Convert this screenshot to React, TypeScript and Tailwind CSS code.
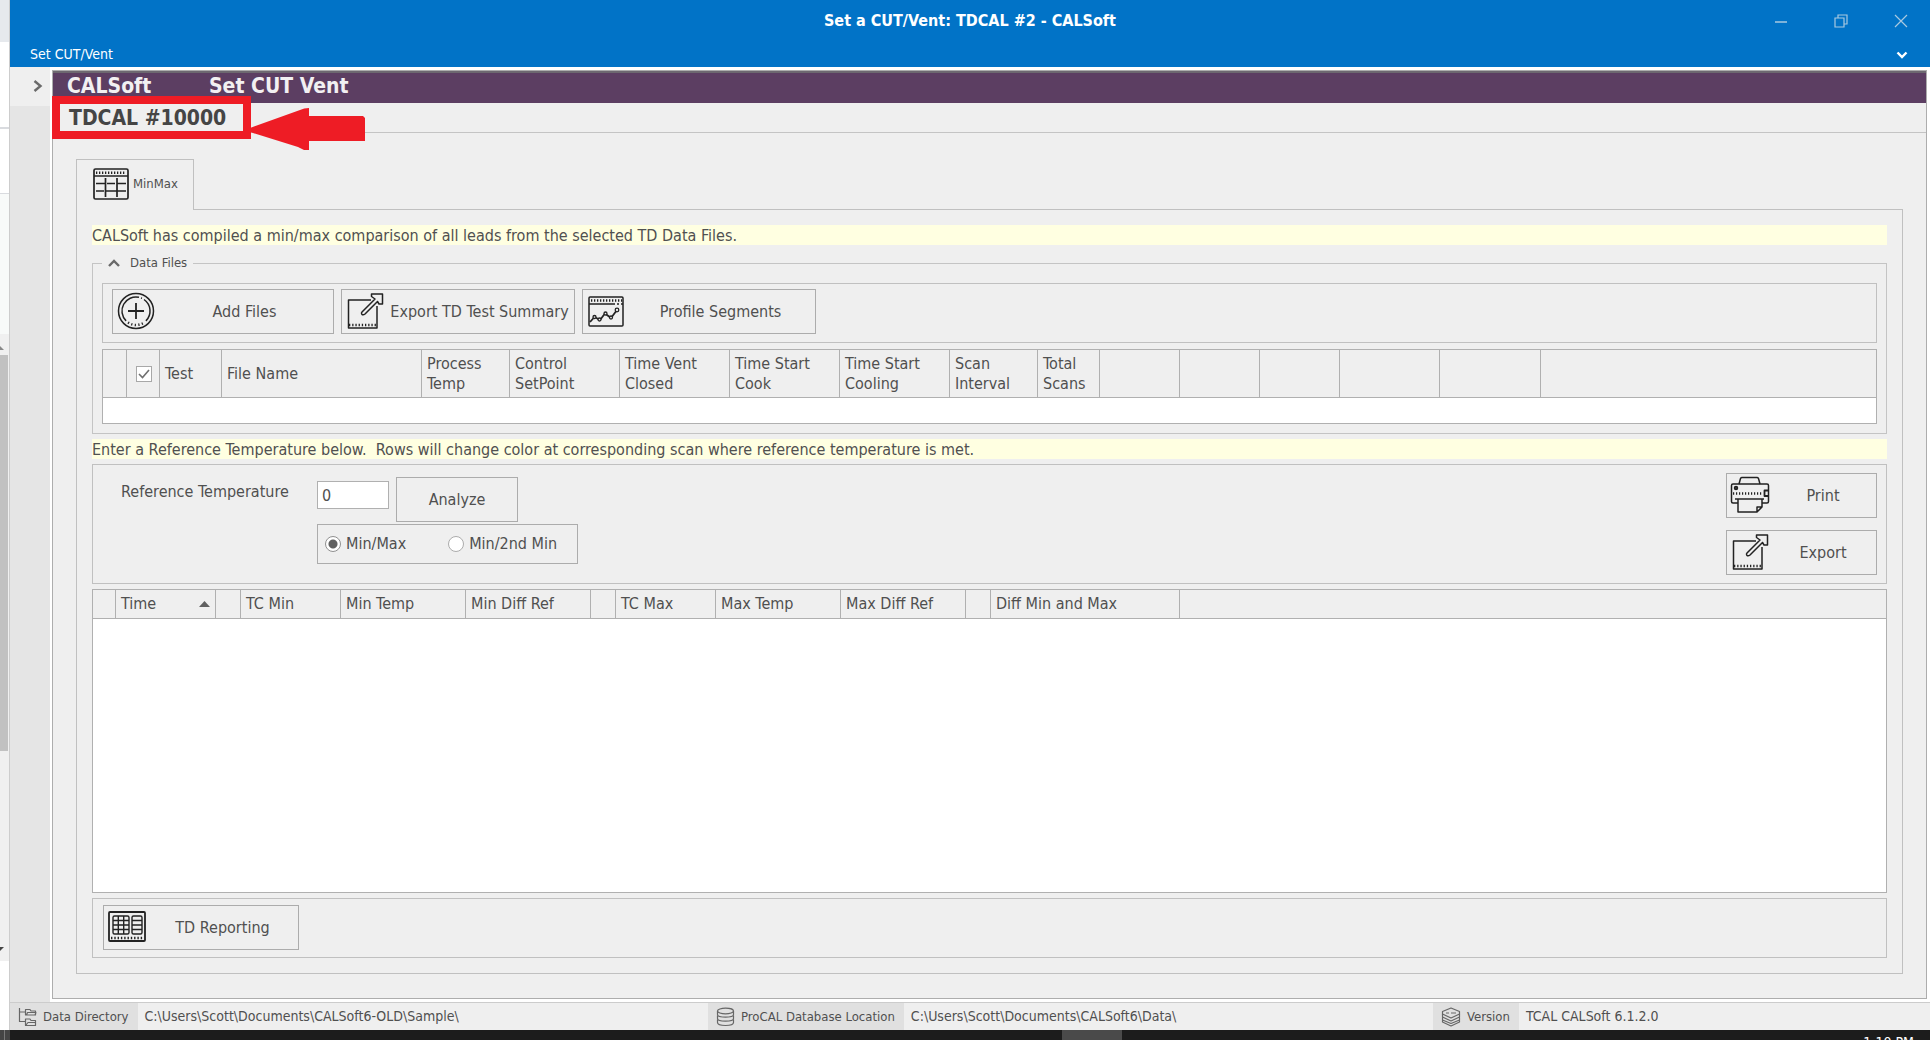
import { useState, type ReactNode } from "react";

type Column = { id: string; label?: ReactNode; width?: number; sorted?: boolean };

const FILE_COLUMNS: Column[] = [
  { id: "handle", width: 24 },
  { id: "check", width: 33 },
  { id: "test", label: "Test", width: 62 },
  { id: "file", label: "File Name", width: 200 },
  { id: "process", label: <>Process<br />Temp</>, width: 88 },
  { id: "control", label: <>Control<br />SetPoint</>, width: 110 },
  { id: "vent", label: <>Time Vent<br />Closed</>, width: 110 },
  { id: "cook", label: <>Time Start<br />Cook</>, width: 110 },
  { id: "cooling", label: <>Time Start<br />Cooling</>, width: 110 },
  { id: "interval", label: <>Scan<br />Interval</>, width: 88 },
  { id: "scans", label: <>Total<br />Scans</>, width: 62 },
  { id: "e1", width: 80 },
  { id: "e2", width: 80 },
  { id: "e3", width: 80 },
  { id: "e4", width: 100 },
  { id: "e5", width: 101 },
  { id: "rest" },
];

const RESULT_COLUMNS: Column[] = [
  { id: "handle", width: 23 },
  { id: "time", label: "Time", width: 100, sorted: true },
  { id: "gap1", width: 25 },
  { id: "tcmin", label: "TC Min", width: 100 },
  { id: "mintemp", label: "Min Temp", width: 125 },
  { id: "mindiff", label: "Min Diff Ref", width: 125 },
  { id: "gap2", width: 25 },
  { id: "tcmax", label: "TC Max", width: 100 },
  { id: "maxtemp", label: "Max Temp", width: 125 },
  { id: "maxdiff", label: "Max Diff Ref", width: 125 },
  { id: "gap3", width: 25 },
  { id: "diff", label: "Diff Min and Max", width: 189 },
  { id: "rest" },
];

function PlusIcon() {
  return (
    <svg width="38" height="38" viewBox="0 0 38 38" fill="none" stroke="#222" strokeWidth="1.5">
      <circle cx="19" cy="19" r="17.5" />
      <path d="M9.100 28.900A14 14 0 0 1 22 5.300M24 6L25 6.300M27 7.500A14 14 0 0 1 28.900 28.900" />
      <path d="M11 30.500Q19 35.500 27.500 30.500" strokeWidth="2.500" strokeDasharray="1.2 2.4" />
      <path d="M11 19h16M19 11v16" strokeWidth="1.800" />
    </svg>
  );
}

function ExportIcon() {
  return (
    <svg width="38" height="38" viewBox="0 0 38 38" fill="none" stroke="#222" strokeWidth="1.500" strokeLinejoin="round">
      <path d="M25 8H2.500V36H31V14" />
      <path d="M3 33H31" strokeWidth="2.500" strokeDasharray="1.300 1.900" />
      <path d="M16 20L29 7L25.500 4.500V2H36.500V12H33L31.500 9.500L19 22Q17 23.500 15.800 22.200Q15 21 16 20Z" fill="#efefef" />
    </svg>
  );
}

function ChartIcon() {
  return (
    <svg width="38" height="38" viewBox="0 0 38 38" fill="none" stroke="#222" strokeWidth="1.500" strokeLinejoin="round">
      <rect x="2" y="5" width="34" height="29" rx="1" />
      <path d="M2 12H28M30 12h2M34 12h2" />
      <path d="M4 8.500H35" strokeWidth="2.500" strokeDasharray="1.300 1.700" />
      <path d="M3 30L7.500 25L13 28L18 21.500L24 26L30 18" strokeWidth="1.800" />
      <g fill="#efefef" strokeWidth="1.300">
        <circle cx="7.500" cy="25" r="1.500" />
        <circle cx="12.500" cy="27.500" r="1.500" />
        <circle cx="18.500" cy="21.500" r="1.500" />
        <circle cx="24" cy="25.500" r="1.500" />
        <circle cx="30" cy="18" r="1.800" />
      </g>
    </svg>
  );
}

function GridIcon() {
  return (
    <svg width="36" height="32" viewBox="0 0 36 32" fill="none" stroke="#222" strokeWidth="1.700">
      <rect x="1" y="1" width="34" height="30" rx="1.500" />
      <path d="M1 8H35" />
      <path d="M3 4.700H33" strokeWidth="2.500" strokeDasharray="1.300 1.700" />
      <path d="M12.500 10V29M24 10V29M3 15.500H12M14 15.500H22M24 15.500H33M3 23H11M13 23H33" />
    </svg>
  );
}

function PrinterIcon() {
  return (
    <svg width="40" height="38" viewBox="0 0 40 38" fill="none" stroke="#222" strokeWidth="1.500" strokeLinejoin="round">
      <path d="M9 8L10.500 2.500Q11 1.500 12 1.500H27Q28 1.500 28.500 2.500L30 8" />
      <path d="M8 27H3Q1.500 27 1.500 25.500V9.500Q1.500 8 3 8H37Q38.500 8 38.500 9.500V25.500Q38.500 27 37 27H32" />
      <path d="M5 23H34" />
      <path d="M8 23V36H27L32 31V23M27 36V31H32" />
      <path d="M3 17.500H33" strokeWidth="2.500" strokeDasharray="1.200 1.800" />
      <path d="M38.500 14.500H34.500V20H38.500" strokeWidth="1.800" />
      <circle cx="6" cy="12" r="1.500" fill="#444" />
    </svg>
  );
}

function ReportIcon() {
  return (
    <svg width="38" height="31" viewBox="0 0 38 31" fill="none" stroke="#222" strokeWidth="1.800">
      <rect x="1" y="1" width="36" height="29" rx="1" />
      <rect x="5" y="5" width="16" height="18" rx="1.500" strokeWidth="1.400" />
      <rect x="24" y="5" width="10" height="18" rx="1.500" strokeWidth="1.400" />
      <path d="M5 9.500H21M5 14H21M5 18.500H21M10.300 5V23M15.700 5V23M24 9.500H34M24 14H34M24 18.500H34" strokeWidth="1.400" />
      <path d="M3 27H36" strokeWidth="2.500" strokeDasharray="1.400 1.900" />
    </svg>
  );
}

function FoldersIcon() {
  return (
    <svg width="19" height="20" viewBox="0 0 19 20" fill="none" stroke="#666" strokeWidth="1.200" strokeLinejoin="round">
      <path d="M1.500 1V14.500H8M1.500 5H7" />
      <path d="M7.500 8V2.500H12L13 4H17.500V8ZM8.500 8L9.500 5.500H18L17 8M7.500 18.500V12H12L13 13.500H17.500V18.500ZM8 18L10 15.500H18" />
    </svg>
  );
}

function DatabaseIcon() {
  return (
    <svg width="19" height="20" viewBox="0 0 19 20" fill="none" stroke="#666" strokeWidth="1.200">
      <ellipse cx="9.500" cy="4" rx="8" ry="2.800" />
      <path d="M1.500 4V7.500C1.500 11 17.500 11 17.500 7.500V4M1.500 8.500V11.500C1.500 15 17.500 15 17.500 11.500V8.500M1.500 12.500V15.500C1.500 19.500 17.500 19.500 17.500 15.500V12.500" />
    </svg>
  );
}

function LayersIcon() {
  return (
    <svg width="20" height="20" viewBox="0 0 20 20" fill="none" stroke="#666" strokeWidth="1.200" strokeLinejoin="round">
      <path d="M10 1L18.500 4.500V7L10 11L1.500 7V4.500ZM5 6H8M10 6H15" />
      <path d="M1.500 7V10L10 14L18.500 10V7M1.500 10.500V13L10 16.500L18.500 13V10.500M1.500 13.500V15L10 19L18.500 15V13.500" />
    </svg>
  );
}

function ToolButton({ icon, label, className }: { icon: ReactNode; label: string; className: string }) {
  return (
    <button type="button" className={`flex h-[45px] items-center border border-[#acacac] pl-[3px] ${className}`}>
      <span className="flex w-10 shrink-0 justify-center pb-[2px]">{icon}</span>
      <span className="flex-1 whitespace-nowrap text-center">{label}</span>
    </button>
  );
}

function HeaderRow({ columns, className, check }: { columns: Column[]; className: string; check?: ReactNode }) {
  return (
    <table className="w-full table-fixed border-separate border-spacing-0">
      <colgroup>
        {columns.map((c) => (
          <col key={c.id} style={{ width: c.width }} />
        ))}
      </colgroup>
      <thead>
        <tr className={className}>
          {columns.map((c) => (
            <th
              key={c.id}
              scope="col"
              className="whitespace-nowrap border-b border-r border-[#b0b0b0] bg-[#efefef] px-[5px] text-left font-normal leading-5 last:border-r-0"
            >
              {c.id === "check" ? check : c.sorted ? (
                <span className="flex items-center justify-between">
                  {c.label}
                  <svg width="11" height="6" viewBox="0 0 11 6"><path d="M0 6L5.500 0L11 6Z" fill="#606060" /></svg>
                </span>
              ) : c.label}
            </th>
          ))}
        </tr>
      </thead>
    </table>
  );
}

function Hint({ children }: { children: ReactNode }) {
  return <p className="h-5 whitespace-pre bg-[#ffffe1] leading-[22px]">{children}</p>;
}

function Status({ icon, label, value }: { icon: ReactNode; label: string; value: string }) {
  return (
    <div className="flex h-full items-center">
      <span className="flex h-full items-center gap-[6px] bg-[#e0e0e0] pl-2 pr-[9px] text-[13px]">
        {icon}
        {label}
      </span>
      <span className="pl-[7px]">{value}</span>
    </div>
  );
}

// Sliver of the window that sits behind the main one
function BackgroundWindow() {
  return (
    <div className="flex w-[10px] shrink-0 flex-col border-r border-[#cdcdcd] bg-white">
      <div className="h-[42px] bg-[#e6e9ed]" />
      <div className="h-[87px] border-b-2 border-[#d9dbdf]" />
      <div className="h-[65px] border-b border-[#d9dbdf]" />
      <div className="h-[140px] bg-[#f8faf9]" />
      <div className="flex h-[627px] flex-col justify-between bg-[#f0f0f0]">
        <div>
          <svg className="mt-[12px]" width="4" height="4" viewBox="0 0 4 4"><path d="M0 0L4 4H0Z" fill="#888" /></svg>
          <div className="mt-[5px] h-[396px] w-2 bg-[#c1c1c1]" />
        </div>
        <svg className="mb-[10px]" width="4" height="4" viewBox="0 0 4 4"><path d="M0 0H4L0 4Z" fill="#444" /></svg>
      </div>
    </div>
  );
}

export default function App() {
  const [reference, setReference] = useState("0");
  const [mode, setMode] = useState("max");
  const [selected, setSelected] = useState(true);

  return (
    <div className="flex min-h-screen flex-col font-['DejaVu_Sans_Condensed','DejaVu_Sans',sans-serif] text-[16px] text-[#505050]">
      <div className="flex flex-1">
        <BackgroundWindow />
        <div className="flex min-w-0 flex-1 flex-col bg-[#efefef]">
          <header className="flex h-[67px] flex-col bg-[#0173c7] text-white">
            <div className="grid h-[42px] grid-cols-[1fr_auto_1fr] items-center">
              <h1 className="col-start-2 font-bold">Set a CUT/Vent: TDCAL #2 - CALSoft</h1>
              <div className="flex justify-end gap-[46px] pr-[22px] text-[#a9c9e0]">
                <button type="button" aria-label="Minimize">
                  <svg width="14" height="14" viewBox="0 0 14 14" stroke="currentColor" strokeWidth="1.500"><path d="M1 8H13" /></svg>
                </button>
                <button type="button" aria-label="Restore">
                  <svg width="14" height="14" viewBox="0 0 14 14" fill="none" stroke="currentColor" strokeWidth="1.200"><path d="M1 4H10V13H1ZM4 4V1H13V10H10" /></svg>
                </button>
                <button type="button" aria-label="Close">
                  <svg width="14" height="14" viewBox="0 0 14 14" stroke="currentColor" strokeWidth="1.200"><path d="M1 1L13 13M13 1L1 13" /></svg>
                </button>
              </div>
            </div>
            <div className="flex h-[25px] items-center justify-between pl-5 pr-[22px] text-[14px]">
              <button type="button">Set CUT/Vent</button>
              <button type="button" aria-label="Expand ribbon">
                <svg width="12" height="8" viewBox="0 0 12 8" fill="none" stroke="#fff" strokeWidth="2.400"><path d="M1.500 1.500L6 6L10.500 1.500" /></svg>
              </button>
            </div>
          </header>

          <div className="flex flex-1">
            <aside className="w-10 shrink-0 bg-[#e5e5e5]">
              <button type="button" aria-label="Open navigation" className="flex h-[39px] w-full items-center justify-end bg-[#efefef] pr-[7px] pb-[2px]">
                <svg width="10" height="12" viewBox="0 0 10 12" fill="none" stroke="#6a6a6a" strokeWidth="2.400"><path d="M1.500 1L7.500 6L1.500 11" /></svg>
              </button>
            </aside>

            <div className="flex min-w-0 flex-1 bg-white py-[3px] pl-[2px] pr-[3px]">
              <main className="relative flex min-w-0 flex-1 flex-col border border-[#adadad] bg-[#efefef]">
                <div className="flex h-8 items-center border-t-2 border-[#6d6870] bg-[#5c3e62] pb-[2px] pl-[14px] text-[21px] font-bold text-[#f2f0f2]">
                  <span className="w-[142px]">CALSoft</span>
                  <span>Set CUT Vent</span>
                </div>
                <h2 className="flex h-[30px] items-center border-b border-[#c4c4c4] pl-4 pt-[2px] text-[21px] font-bold text-[#454545]">TDCAL #10000</h2>

                {/* callout around the record number */}
                <div className="pointer-events-none absolute -left-px top-[25px] h-[43px] w-[199px] border-8 border-[#ee1c25]" />
                <svg className="pointer-events-none absolute left-[197px] top-[37px]" width="115" height="42" viewBox="0 0 115 42">
                  <path d="M0 20L50 2Q54 0 59 0V8H113L115 10V33H59V42H54L48 39L0 24Z" fill="#ee1c25" />
                </svg>

                <div className="flex flex-1 flex-col px-[23px] pb-6 pt-[26px]">
                  <div role="tablist" className="flex">
                    <button type="button" role="tab" aria-selected="true" className="relative z-10 -mb-px flex h-[51px] w-[118px] items-center gap-1 border border-b-0 border-[#c0c0c0] bg-[#efefef] pb-[2px] pl-4 text-[13px]">
                      <GridIcon />
                      MinMax
                    </button>
                  </div>

                  <section className="flex flex-1 flex-col border border-[#c0c0c0] pb-[15px] pl-[15px] pr-[15px] pt-[15px]">
                    <Hint>CALSoft has compiled a min/max comparison of all leads from the selected TD Data Files.</Hint>

                    <fieldset className="mt-2 min-w-0 border border-[#c4c4c4] px-[9px] pb-[9px]">
                      <legend className="flex h-5 items-center gap-[10px] px-[6px] text-[13px]">
                        <svg width="12" height="8" viewBox="0 0 12 8" fill="none" stroke="#6a6a6a" strokeWidth="2.400"><path d="M1 7L6 2L11 7" /></svg>
                        Data Files
                      </legend>
                      <div className="mt-[10px] flex h-[60px] gap-[7px] border border-[#c0c0c0] pl-[9px] pt-[5px]">
                        <ToolButton icon={<PlusIcon />} label="Add Files" className="w-[222px]" />
                        <ToolButton icon={<ExportIcon />} label="Export TD Test Summary" className="w-[234px]" />
                        <ToolButton icon={<ChartIcon />} label="Profile Segments" className="w-[234px]" />
                      </div>
                      <div className="mt-[6px] h-[75px] border border-[#b0b0b0] bg-white">
                        <HeaderRow
                          columns={FILE_COLUMNS}
                          className="h-12"
                          check={
                            <span className="relative ml-1 block h-4 w-4">
                              <input
                                type="checkbox"
                                aria-label="Select all files"
                                checked={selected}
                                onChange={(e) => setSelected(e.target.checked)}
                                className="peer block h-4 w-4 appearance-none border border-[#a8a8a8] bg-white"
                              />
                              <svg className="pointer-events-none absolute inset-0 hidden peer-checked:block" width="16" height="16" viewBox="0 0 16 16" fill="none" stroke="#707070" strokeWidth="1.600"><path d="M3 8L6.500 11.500L13 4" /></svg>
                            </span>
                          }
                        />
                      </div>
                    </fieldset>

                    <div className="mt-[5px]">
                      <Hint>Enter a Reference Temperature below.  Rows will change color at corresponding scan where reference temperature is met.</Hint>
                    </div>

                    <div className="mt-[5px] flex h-[120px] justify-between border border-[#c0c0c0] pl-7 pr-[9px]">
                      <div className="flex pt-[12px]">
                        <label htmlFor="reference" className="w-[196px] pt-[5px] leading-5">Reference Temperature</label>
                        <div>
                          <div className="flex gap-[7px]">
                            <input
                              id="reference"
                              value={reference}
                              onChange={(e) => setReference(e.target.value)}
                              className="mt-1 h-7 w-[72px] border border-[#b0b0b0] bg-white px-1"
                            />
                            <button type="button" className="h-[45px] w-[122px] border border-[#acacac]">Analyze</button>
                          </div>
                          <div role="radiogroup" aria-label="Comparison" className="mt-[2px] flex h-10 w-[261px] items-center gap-[42px] border border-[#acacac] pl-[7px]">
                            {[
                              { id: "max", label: "Min/Max" },
                              { id: "second", label: "Min/2nd Min" },
                            ].map((option) => (
                              <label key={option.id} className="flex items-center gap-[5px] whitespace-nowrap">
                                <input
                                  type="radio"
                                  name="mode"
                                  checked={mode === option.id}
                                  onChange={() => setMode(option.id)}
                                  className="h-4 w-4 appearance-none rounded-full border border-[#acacac] bg-white checked:border-[#909090] checked:bg-[radial-gradient(circle,#606060_4px,white_5px)]"
                                />
                                {option.label}
                              </label>
                            ))}
                          </div>
                        </div>
                      </div>
                      <div className="flex flex-col gap-3 pt-2">
                        <ToolButton icon={<PrinterIcon />} label="Print" className="w-[151px]" />
                        <ToolButton icon={<ExportIcon />} label="Export" className="w-[151px]" />
                      </div>
                    </div>

                    <div className="mt-[5px] min-h-[120px] flex-1 border border-[#b0b0b0] bg-white">
                      <HeaderRow columns={RESULT_COLUMNS} className="h-[29px]" />
                    </div>

                    <div className="mt-[5px] h-[60px] border border-[#c0c0c0] pl-[10px] pt-[6px]">
                      <ToolButton icon={<ReportIcon />} label="TD Reporting" className="w-[196px]" />
                    </div>
                  </section>
                </div>
              </main>
            </div>
          </div>

          <footer className="grid h-[28px] grid-cols-[698fr_725fr_497fr] items-center border-t border-[#cccccc] text-[14px]">
            <Status icon={<FoldersIcon />} label="Data Directory" value="C:\Users\Scott\Documents\CALSoft6-OLD\Sample\" />
            <Status icon={<DatabaseIcon />} label="ProCAL Database Location" value="C:\Users\Scott\Documents\CALSoft6\Data\" />
            <Status icon={<LayersIcon />} label="Version" value="TCAL CALSoft 6.1.2.0" />
          </footer>
        </div>
      </div>

      {/* top edge of the taskbar */}
      <div className="flex h-[10px] shrink-0 overflow-hidden bg-[#1c1c1c] text-[14px] text-white">
        <div className="w-[10px] bg-[#444]"><div className="h-full w-[5px] border-r border-[#777]" /></div>
        <div className="ml-[54.5%] w-[60px] bg-[#4a4a4a]" />
        <time className="ml-auto pr-4 pt-[4px] leading-4">1:10 PM</time>
      </div>
    </div>
  );
}
